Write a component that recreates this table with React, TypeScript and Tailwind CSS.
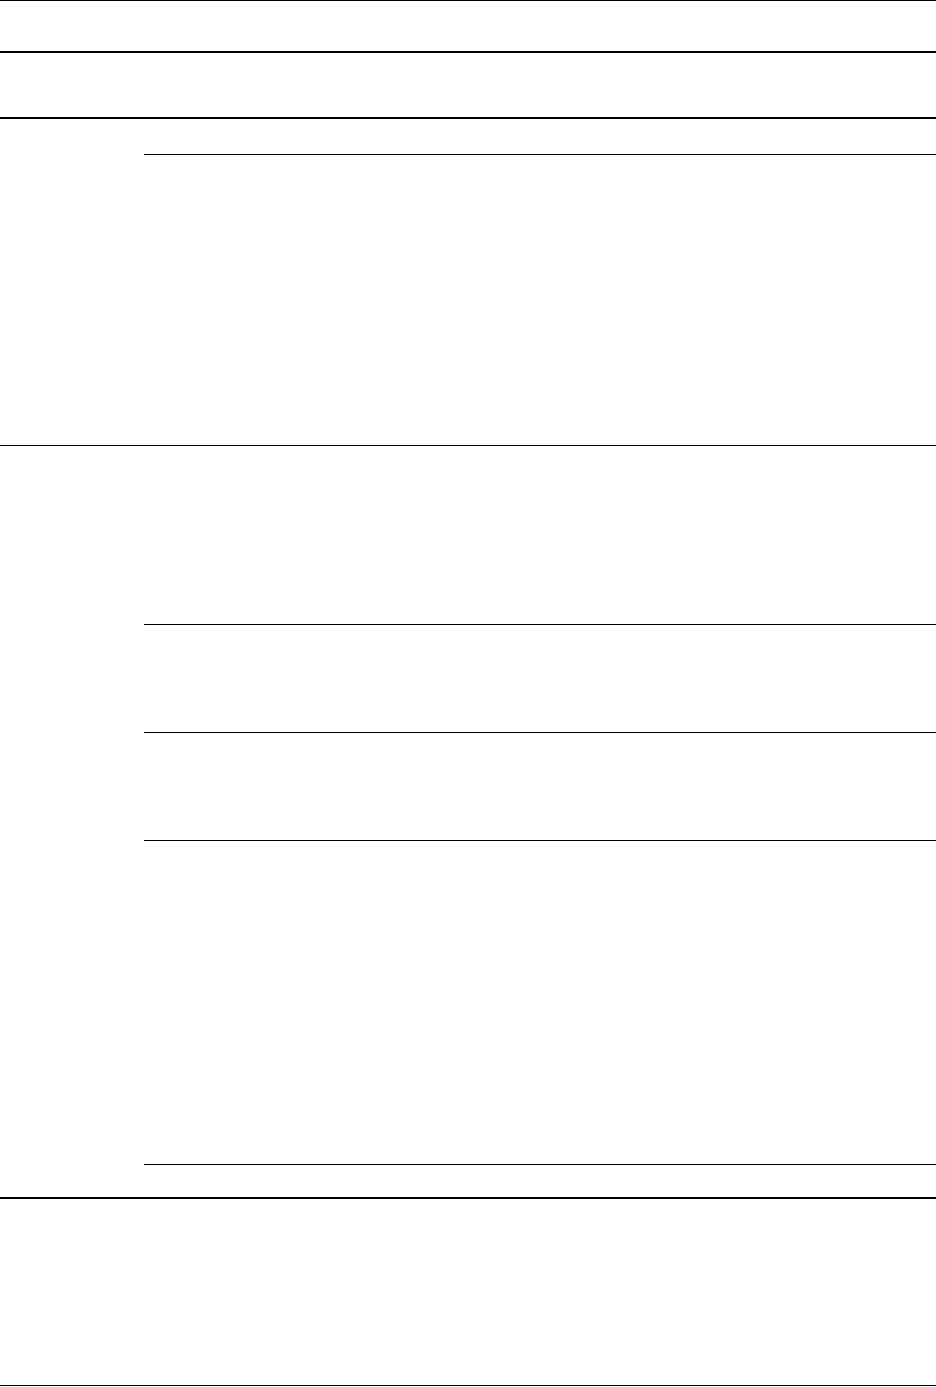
import React from 'react';

// empty ruled table: only the borders are visible in the reference
export default function App() {
  return (
    <div className="min-h-screen w-full bg-white font-['Liberation_Sans',sans-serif] text-black">
      <div className="flex w-full flex-col">
        {/* Header */}
        <div className="h-[53px] border-t border-b-2 border-black" />
        <div className="h-[66px] border-b-2 border-black" />

        {/* Group 1 */}
        <div className="flex border-b border-black">
          <div className="w-[144px] shrink-0" />
          <div className="flex flex-1 flex-col">
            <div className="h-[36px] border-b border-black" />
            <div className="h-[290px]" />
          </div>
        </div>

        {/* Group 2 */}
        <div className="flex border-b-2 border-black">
          <div className="w-[144px] shrink-0" />
          <div className="flex flex-1 flex-col">
            <div className="h-[179px] border-b border-black" />
            <div className="h-[108px] border-b border-black" />
            <div className="h-[108px] border-b border-black" />
            <div className="h-[324px] border-b border-black" />
            <div className="h-[32px]" />
          </div>
        </div>

        {/* Footer */}
        <div className="h-[187px] border-b border-black" />
      </div>
    </div>
  );
}
